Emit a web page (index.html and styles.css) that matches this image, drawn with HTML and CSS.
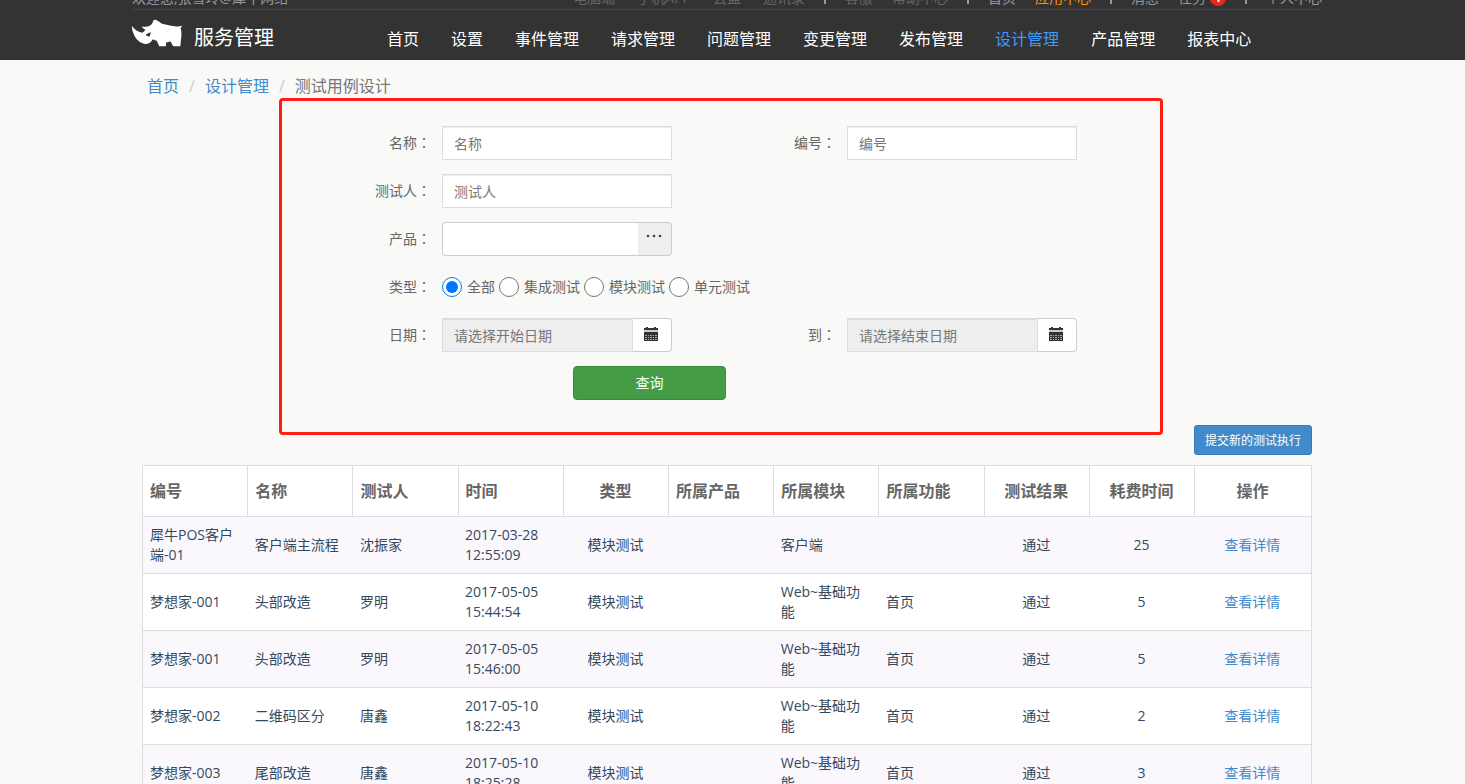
FILE: index.html
```
<!DOCTYPE html>
<html lang="zh-CN">
<head>
  <meta charset="UTF-8" />
  <meta name="viewport" content="width=device-width, initial-scale=1.0" />
  <title>测试用例设计 - 服务管理</title>
  <link rel="stylesheet" href="styles.css">
</head>
<body>
  <header class="header">
    <div class="container">
      <div class="top-bar">
        <span class="welcome">欢迎您,张雪玲@犀牛网络</span>
        <div class="top-links">
          <div class="apps">
            <a class="dim" href="#">电脑端</a>
            <a class="dim" href="#">手机APP</a>
            <a class="dim" href="#">云盘</a>
            <a class="dim" href="#">通讯录</a>
          </div>
          <span class="bar"></span>
          <a class="dim" href="#">客服</a>
          <a class="dim" href="#">帮助中心</a>
          <span class="bar"></span>
          <a href="#">首页</a>
          <a class="orange" href="#">应用中心</a>
          <span class="bar"></span>
          <a href="#">消息</a>
          <a class="task" href="#">任务<span class="badge">1</span></a>
          <span class="bar"></span>
          <a href="#">个人中心</a>
        </div>
      </div>
      <div class="main-bar">
        <a class="brand" href="#">
          <svg class="logo" viewBox="21 23 151 82" aria-hidden="true">
            <path fill="#fff" fill-rule="evenodd" d="M21 43C27 53 38 61 52 63C57 60 60 57 61 54C57 51 52 48 50 44C58 46 67 46 73 43C80 39 84 34 85 27C87 23 92 23 97 26C104 29 108 35 115 37C130 39 145 45 157 44C163 44 168 43 172 42C172 45 169 47 168 49C171 60 171 72 169 84L167 104H146C142 100 140 94 137 89C133 92 128 92 125 92C123 96 124 101 123 104H103C100 98 98 91 95 87C90 86 86 82 83 84C79 93 71 98 61 97C45 94 33 83 27 69C23 60 20 51 21 43ZM62 71C67 72 71 77 75 73C75 69 78 67 78 62C72 65 67 65 62 71Z"/>
          </svg>
          <span>服务管理</span>
        </a>
        <nav class="nav">
          <a href="#">首页</a>
          <a href="#">设置</a>
          <a href="#">事件管理</a>
          <a href="#">请求管理</a>
          <a href="#">问题管理</a>
          <a href="#">变更管理</a>
          <a href="#">发布管理</a>
          <a class="active" href="#">设计管理</a>
          <a href="#">产品管理</a>
          <a href="#">报表中心</a>
        </nav>
      </div>
    </div>
  </header>

  <main class="main">
    <div class="container content">
      <ol class="breadcrumb">
        <li><a href="#">首页</a></li>
        <li><a href="#">设计管理</a></li>
        <li>测试用例设计</li>
      </ol>

      <form class="search-form">
        <label for="name">名称<span class="colon" lang="zh-TW">：</span></label>
        <input type="text" id="name" name="name" placeholder="名称">
        <label for="code">编号<span class="colon" lang="zh-TW">：</span></label>
        <input type="text" id="code" name="code" placeholder="编号">

        <label for="tester">测试人<span class="colon" lang="zh-TW">：</span></label>
        <input type="text" id="tester" name="tester" placeholder="测试人">

        <label class="first" for="product">产品<span class="colon" lang="zh-TW">：</span></label>
        <div class="input-group product">
          <input type="text" id="product" name="product">
          <button type="button" aria-label="选择产品">
            <svg width="16" height="4" viewBox="0 0 16 4" fill="#444"><circle cx="2" cy="2" r="1.3"/><circle cx="8" cy="2" r="1.3"/><circle cx="14" cy="2" r="1.3"/></svg>
          </button>
        </div>

        <span class="label first" id="type-label">类型<span class="colon" lang="zh-TW">：</span></span>
        <div class="radio-group" role="radiogroup" aria-labelledby="type-label">
          <label><input type="radio" name="type" value="" checked>全部</label>
          <label><input type="radio" name="type" value="1">集成测试</label>
          <label><input type="radio" name="type" value="2">模块测试</label>
          <label><input type="radio" name="type" value="3">单元测试</label>
        </div>

        <label class="first" for="start">日期<span class="colon" lang="zh-TW">：</span></label>
        <div class="input-group date">
          <input type="text" id="start" name="start" placeholder="请选择开始日期" readonly>
          <button type="button" aria-label="开始日期">
            <svg width="14" height="14" viewBox="0 0 14 14"><path fill="#ccc" d="M0 3h14v2H0z"/><path fill="#333" d="M2 0h2v1h6V0h2v1h2v2H0V1h2zM0 5h14v9H0z"/><path fill="#aaa" d="M1 8h2v1H1zM4 8h1v1H4zM6 8h2v1H6zM9 8h1v1H9zM11 8h2v1h-2zM1 10h2v1H1zM4 10h1v1H4zM6 10h2v1H6zM9 10h1v1H9zM11 10h2v1h-2zM1 12h2v1H1zM4 12h1v1H4zM6 12h2v1H6zM9 12h1v1H9zM11 12h2v1h-2z"/></svg>
          </button>
        </div>
        <label for="end">到<span class="colon" lang="zh-TW">：</span></label>
        <div class="input-group date">
          <input type="text" id="end" name="end" placeholder="请选择结束日期" readonly>
          <button type="button" aria-label="结束日期">
            <svg width="14" height="14" viewBox="0 0 14 14"><path fill="#ccc" d="M0 3h14v2H0z"/><path fill="#333" d="M2 0h2v1h6V0h2v1h2v2H0V1h2zM0 5h14v9H0z"/><path fill="#aaa" d="M1 8h2v1H1zM4 8h1v1H4zM6 8h2v1H6zM9 8h1v1H9zM11 8h2v1h-2zM1 10h2v1H1zM4 10h1v1H4zM6 10h2v1H6zM9 10h1v1H9zM11 10h2v1h-2zM1 12h2v1H1zM4 12h1v1H4zM6 12h2v1H6zM9 12h1v1H9zM11 12h2v1h-2z"/></svg>
          </button>
        </div>

        <div class="actions">
          <button type="submit" class="btn-search">查询</button>
        </div>
      </form>

      <div class="toolbar">
        <button type="button" class="btn-new">提交新的测试执行</button>
      </div>

      <table class="list">
        <thead>
          <tr>
            <th>编号</th>
            <th>名称</th>
            <th>测试人</th>
            <th>时间</th>
            <th class="center">类型</th>
            <th>所属产品</th>
            <th>所属模块</th>
            <th>所属功能</th>
            <th class="center">测试结果</th>
            <th class="center">耗费时间</th>
            <th class="center last">操作</th>
          </tr>
        </thead>
        <tbody>
          <tr>
            <td>犀牛POS客户端-01</td>
            <td>客户端主流程</td>
            <td>沈振家</td>
            <td>2017-03-28 12:55:09</td>
            <td class="center">模块测试</td>
            <td></td>
            <td>客户端</td>
            <td></td>
            <td class="center">通过</td>
            <td class="center">25</td>
            <td class="center"><a href="#">查看详情</a></td>
          </tr>
          <tr>
            <td>梦想家-001</td>
            <td>头部改造</td>
            <td>罗明</td>
            <td>2017-05-05 15:44:54</td>
            <td class="center">模块测试</td>
            <td></td>
            <td>Web~基础功能</td>
            <td>首页</td>
            <td class="center">通过</td>
            <td class="center">5</td>
            <td class="center"><a href="#">查看详情</a></td>
          </tr>
          <tr>
            <td>梦想家-001</td>
            <td>头部改造</td>
            <td>罗明</td>
            <td>2017-05-05 15:46:00</td>
            <td class="center">模块测试</td>
            <td></td>
            <td>Web~基础功能</td>
            <td>首页</td>
            <td class="center">通过</td>
            <td class="center">5</td>
            <td class="center"><a href="#">查看详情</a></td>
          </tr>
          <tr>
            <td>梦想家-002</td>
            <td>二维码区分</td>
            <td>唐鑫</td>
            <td>2017-05-10 18:22:43</td>
            <td class="center">模块测试</td>
            <td></td>
            <td>Web~基础功能</td>
            <td>首页</td>
            <td class="center">通过</td>
            <td class="center">2</td>
            <td class="center"><a href="#">查看详情</a></td>
          </tr>
          <tr>
            <td>梦想家-003</td>
            <td>尾部改造</td>
            <td>唐鑫</td>
            <td>2017-05-10 18:25:28</td>
            <td class="center">模块测试</td>
            <td></td>
            <td>Web~基础功能</td>
            <td>首页</td>
            <td class="center">通过</td>
            <td class="center">3</td>
            <td class="center"><a href="#">查看详情</a></td>
          </tr>
        </tbody>
      </table>
    </div>
  </main>
</body>
</html>
```
FILE: styles.css
```
* {
  box-sizing: border-box;
}

body {
  margin: 0;
  font-family: "Open Sans", "Noto Sans CJK SC", sans-serif;
  font-size: 14px;
  line-height: 20px;
  color: #666;
  background-color: #f9f9f7;
}

a {
  color: #428bca;
  text-decoration: none;
}

input,
button {
  font-family: inherit;
  font-size: 14px;
  line-height: 20px;
}

button {
  cursor: pointer;
}

.header,
.main {
  padding-right: 11px;
}

.header {
  background-color: #333;
}

.container {
  max-width: 1190px;
  margin: 0 auto;
}

/* top bar */
.top-bar {
  display: flex;
  justify-content: space-between;
  align-items: flex-end;
  height: 10px;
  padding-bottom: 1px;
  border-bottom: 1px solid #444;
  overflow: hidden;
  color: #999;
}

.top-links {
  display: flex;
  align-items: center;
  gap: 19px;
}

.apps {
  display: flex;
  gap: 22px;
}

.top-links a {
  color: #999;
}

.top-links .dim {
  color: #666;
}

.top-links .orange {
  color: #ff9000;
}

.bar {
  width: 2px;
  height: 12px;
  background-color: #999;
}

.task {
  display: flex;
  align-items: center;
  gap: 4px;
}

.badge {
  width: 16px;
  height: 16px;
  border-radius: 8px;
  background-color: #e8291c;
  color: #fff;
  font-size: 12px;
  font-weight: bold;
  line-height: 16px;
  text-align: center;
}

/* nav */
.main-bar {
  display: flex;
  align-items: center;
  height: 50px;
}

.brand {
  display: flex;
  align-items: flex-end;
  gap: 12px;
  width: 239px;
  padding-bottom: 2px;
  color: #fff;
  font-size: 20px;
  line-height: 22px;
}

.logo {
  width: 50px;
  height: 28px;
  margin-bottom: 2px;
}

.nav {
  display: flex;
  padding-top: 8px;
}

.nav a {
  padding: 0 16px;
  color: #fff;
  font-size: 16px;
  line-height: 24px;
}

.nav .active {
  color: #3c9aff;
}

.content {
  padding: 14px 10px 0;
}

.breadcrumb {
  display: flex;
  margin: 0;
  padding: 0 5px;
  list-style: none;
  font-size: 16px;
  line-height: 24px;
  color: #777;
}

.breadcrumb li + li::before {
  content: "/";
  padding: 0 10px;
  color: #ccc;
}

/* search form */
.search-form {
  display: grid;
  grid-template-columns: 149px 230px 153px 230px;
  gap: 14px 11px;
  max-width: 884px;
  margin: 0 0 -10px 137px;
  padding: 25px 0 32px;
  border: 3px solid #ff1f12;
  border-radius: 4px;
}

.search-form > label,
.search-form > .label {
  line-height: 34px;
  text-align: right;
}

/* the TC face centres the full-width colon in its cell */
.colon {
  font-family: "Noto Sans CJK TC", sans-serif;
  line-height: 1;
}

.search-form .first {
  grid-column: 1;
}

.search-form input[type="text"] {
  width: 100%;
  height: 34px;
  padding: 6px 11px;
  border: 1px solid #ddd;
  background-color: #fff;
  box-shadow: inset 0 1px 1px rgba(0, 0, 0, 0.08);
  color: #555;
}

.search-form input::placeholder {
  color: #777;
}

.input-group {
  display: flex;
}

.search-form .product input {
  border-color: #ccc;
  border-right: none;
  border-radius: 4px 0 0 4px;
  box-shadow: none;
}

.input-group button {
  display: flex;
  justify-content: center;
  align-items: center;
  flex-shrink: 0;
  width: 39px;
  height: 34px;
  padding: 0 2px 2px 0;
  border: 1px solid #ccc;
  border-left: none;
  border-radius: 0 4px 4px 0;
  background-color: #fff;
}

.product button {
  width: 34px;
  padding-bottom: 6px;
  background-color: #eee;
}

.search-form .date input {
  background-color: #eee;
}

.radio-group {
  grid-column: 2 / -1;
  display: flex;
  align-items: center;
  gap: 4px;
  height: 34px;
}

.radio-group label {
  display: flex;
  align-items: center;
  gap: 5px;
}

.radio-group input {
  width: 20px;
  height: 20px;
  margin: 0;
}

.actions {
  grid-column: 1 / -1;
  padding-left: 291px;
}

.btn-search {
  width: 153px;
  height: 34px;
  border: 1px solid #3a8a3d;
  border-radius: 4px;
  background-color: #449d44;
  color: #fff;
}

.toolbar {
  display: flex;
  justify-content: flex-end;
  margin-bottom: 10px;
}

.btn-new {
  height: 30px;
  padding: 2px 10px 0;
  border: 1px solid #357ebd;
  border-radius: 3px;
  background-color: #428bca;
  color: #fff;
  font-size: 12px;
}

/* table */
.list {
  width: 100%;
  table-layout: fixed;
  border-collapse: collapse;
  border: 1px solid #ddd;
  background-color: #fff;
  color: #34495e;
}

.list th {
  width: 9%;
  padding: 14px 8px 14px 7px;
  border: 1px solid #ddd;
  color: #666;
  font-size: 16px;
  line-height: 22px;
  text-align: left;
}

.list .last {
  width: 10%;
}

.list td {
  padding: 8px 8px 8px 7px;
  border-top: 1px solid #ddd;
}

.list tbody tr:nth-child(odd) {
  background-color: #faf8fd;
}

.list .center {
  text-align: center;
}
```
